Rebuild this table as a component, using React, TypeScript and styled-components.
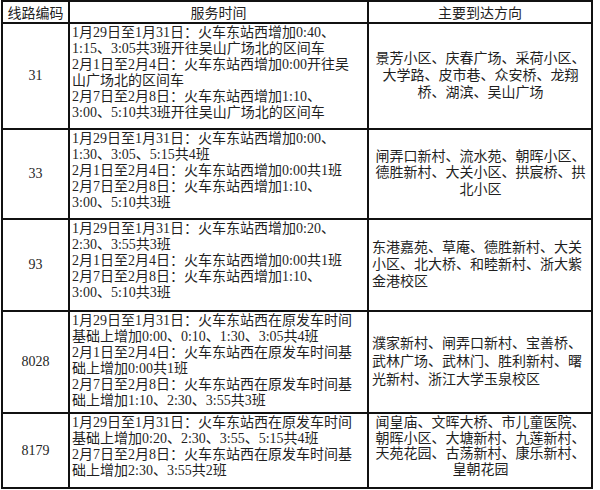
import React from "react";
import styled, { createGlobalStyle } from "styled-components";

const GlobalStyle = createGlobalStyle`
  html, body {
    margin: 0;
    padding: 0;
    background: #fff;
  }
  body {
    font-family: "Liberation Serif", "Noto Sans CJK SC", serif;
    color: #1f1f1f;
  }
`;

const Page = styled.div`
  width: 600px;
  height: 490px;
  padding: 0 0 0 1px;
  box-sizing: border-box;
  background: #fff;
`;

const Table = styled.table`
  border-collapse: collapse;
  table-layout: fixed;
  width: 584px;
  font-size: 14px;
`;

const HeadCell = styled.th<{ $w: number }>`
  width: ${(p) => p.$w}px;
  height: 20px;
  padding: 0;
  border: 2px solid #111;
  font-weight: normal;
  font-size: 14px;
  line-height: 18px;
  text-align: center;
  vertical-align: middle;
  white-space: nowrap;
  font-family: "Noto Sans CJK SC", sans-serif;
`;

const Row = styled.tr<{ $h: number }>`
  height: ${(p) => p.$h}px;
`;

const CodeCell = styled.td`
  padding: 0;
  border: 2px solid #111;
  text-align: center;
  vertical-align: middle;
  font-size: 14px;
`;

const TimeCell = styled.td`
  padding: 1px 0 0 2px;
  border: 2px solid #111;
  vertical-align: top;
  overflow: hidden;
`;

const DestCell = styled.td<{ $align: "left" | "center"; $valign: "top" | "middle" }>`
  padding: 1px 2px 2px 3px;
  border: 2px solid #111;
  text-align: ${(p) => p.$align};
  vertical-align: ${(p) => p.$valign};
  overflow: hidden;
`;

const Line = styled.div<{ $lh?: number }>`
  white-space: nowrap;
  line-height: ${(p) => p.$lh ?? 16}px;
  height: ${(p) => p.$lh ?? 16}px;
`;

type Route = {
  code: string;
  height: number;
  times: string[];
  dest: string[];
  align: "left" | "center";
  valign: "top" | "middle";
  destLh: number;
};

const routes: Route[] = [
  {
    code: "31",
    height: 106,
    times: [
      "1月29日至1月31日：火车东站西增加0:40、",
      "1:15、3:05共3班开往吴山广场北的区间车",
      "2月1日至2月4日：火车东站西增加0:00开往吴",
      "山广场北的区间车",
      "2月7日至2月8日：火车东站西增加1:10、",
      "3:00、5:10共3班开往吴山广场北的区间车",
    ],
    dest: ["景芳小区、庆春广场、采荷小区、", "大学路、皮市巷、众安桥、龙翔", "桥、湖滨、吴山广场"],
    align: "center",
    valign: "middle",
    destLh: 17,
  },
  {
    code: "33",
    height: 90,
    times: [
      "1月29日至1月31日：火车东站西增加0:00、",
      "1:30、3:05、5:15共4班",
      "2月1日至2月4日：火车东站西增加0:00共1班",
      "2月7日至2月8日：火车东站西增加1:10、",
      "3:00、5:10共3班",
    ],
    dest: ["闸弄口新村、流水苑、朝晖小区、", "德胜新村、大关小区、拱宸桥、拱", "北小区"],
    align: "center",
    valign: "middle",
    destLh: 16.5,
  },
  {
    code: "93",
    height: 92,
    times: [
      "1月29日至1月31日：火车东站西增加0:20、",
      "2:30、3:55共3班",
      "2月1日至2月4日：火车东站西增加0:00共1班",
      "2月7日至2月8日：火车东站西增加1:10、",
      "3:00、5:10共3班",
    ],
    dest: ["东港嘉苑、草庵、德胜新村、大关", "小区、北大桥、和睦新村、浙大紫", "金港校区"],
    align: "left",
    valign: "middle",
    destLh: 17,
  },
  {
    code: "8028",
    height: 102,
    times: [
      "1月29日至1月31日：火车东站西在原发车时间",
      "基础上增加0:00、0:10、1:30、3:05共4班",
      "2月1日至2月4日：火车东站西在原发车时间基",
      "础上增加0:00共1班",
      "2月7日至2月8日：火车东站西在原发车时间基",
      "础上增加1:10、2:30、3:55共3班",
    ],
    dest: ["濮家新村、闸弄口新村、宝善桥、", "武林广场、武林门、胜利新村、曙", "光新村、浙江大学玉泉校区"],
    align: "left",
    valign: "middle",
    destLh: 18,
  },
  {
    code: "8179",
    height: 75,
    times: [
      "1月29日至1月31日：火车东站西在原发车时间",
      "基础上增加0:20、2:30、3:55、5:15共4班",
      "2月7日至2月8日：火车东站西在原发车时间基",
      "础上增加2:30、3:55共2班",
    ],
    dest: ["闻皇庙、文晖大桥、市儿童医院、", "朝晖小区、大塘新村、九莲新村、", "天苑花园、古荡新村、康乐新村、", "皇朝花园"],
    align: "center",
    valign: "top",
    destLh: 15.5,
  },
];

export default function App() {
  return (
    <Page>
      <GlobalStyle />
      <Table>
        <thead>
          <tr>
            <HeadCell $w={65}>线路编码</HeadCell>
            <HeadCell $w={297}>服务时间</HeadCell>
            <HeadCell $w={222}>主要到达方向</HeadCell>
          </tr>
        </thead>
        <tbody>
          {routes.map((r) => (
            <Row key={r.code} $h={r.height}>
              <CodeCell>{r.code}</CodeCell>
              <TimeCell>
                {r.times.map((t, i) => (
                  <Line key={i}>{t}</Line>
                ))}
              </TimeCell>
              <DestCell $align={r.align} $valign={r.valign}>
                {r.dest.map((d, i) => (
                  <Line key={i} $lh={r.destLh}>
                    {d}
                  </Line>
                ))}
              </DestCell>
            </Row>
          ))}
        </tbody>
      </Table>
    </Page>
  );
}
